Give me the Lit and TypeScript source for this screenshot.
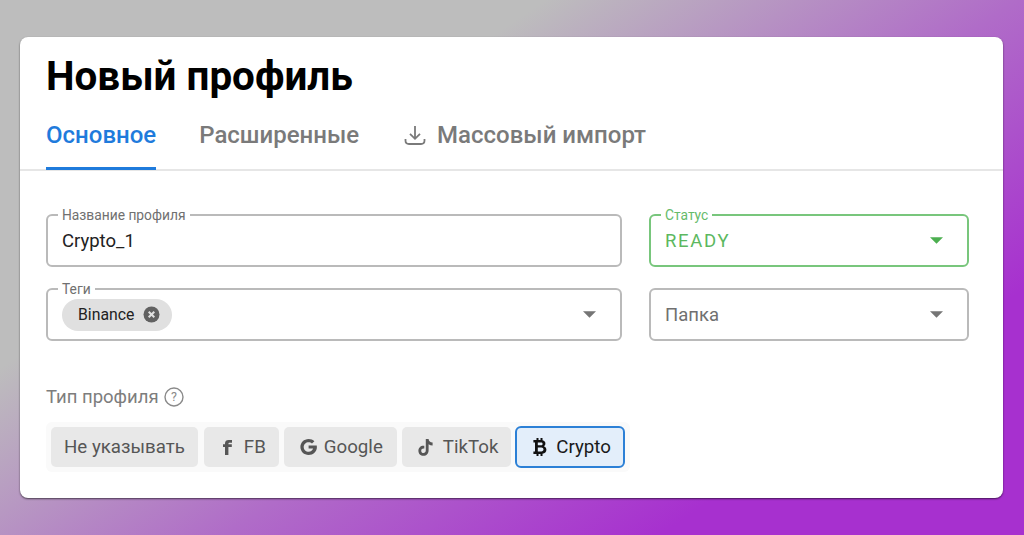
import { LitElement, html, css, svg } from "lit";
import { customElement } from "lit/decorators.js";

const caret = svg`<svg class="caret" width="13" height="7" viewBox="0 0 13 7"><path d="M0 0.2H13L6.5 6.8Z" fill="currentColor"/></svg>`;

@customElement("app-root")
export class AppRoot extends LitElement {
  static styles = css`
    :host { display: block; width: 1024px; height: 535px; overflow: hidden; font-family: Roboto, "Liberation Sans", sans-serif;
      background: linear-gradient(146deg, #bdbdbd 0%, #bdbdbd 30%, #b06cc8 56%, #a730cf 80%, #a730cf 100%); padding: 37px 21px 0 20px; box-sizing: border-box; }
    .card { background: #fff; border-radius: 8px; height: 461px; box-shadow: 0 1px 2px rgba(0,0,0,.6); box-sizing: border-box; }
    .head { padding: 16px 26px 0; border-bottom: 2px solid #e6e6e6; height: 134px; box-sizing: border-box; }
    h1 { margin: 0; font-size: 40.4px; line-height: 48px; font-weight: 700; color: #000; }
    .tabs { display: flex; gap: 43px; margin-top: 8px; }
    .tab { display: flex; align-items: center; gap: 11px; height: 61px; font-size: 24px; font-weight: 500; color: #7a7a7a; box-sizing: border-box; border-bottom: 3px solid transparent; padding-bottom: 7px; position: relative; z-index: 1; }
    .tab.on { color: #1f7bdc; border-bottom-color: #1f7bdc; }
    .tab svg { display: block; }
    .tab.imp { margin-left: 2px; }
    .body { padding: 43px 34px 0 26px; }
    .grid { display: grid; grid-template-columns: 576px 320px; column-gap: 27px; row-gap: 21px; }
    .field { position: relative; height: 53px; box-sizing: border-box; border: 2px solid #bababa; border-radius: 6px; display: flex; align-items: center; padding: 0 14px; font-size: 18.5px; color: #222; }
    .field label { position: absolute; left: 10px; top: -8px; background: #fff; padding: 0 4px; font-size: 13.8px; line-height: 15px; color: #707070; }
    .status { border-color: #78c67c; color: #5cb860; }
    .status label { color: #66bb6a; }
    .ready { letter-spacing: 1.7px; }
    .caret { position: absolute; right: 24px; top: calc(50% - 3.5px); color: #757575; }
    .status .caret { color: #4caf50; }
    .ph { color: #707070; }
    .chip { display: flex; align-items: center; gap: 9px; height: 32px; border-radius: 16px; background: #e0e0e0; padding: 0 12px 0 16px; font-size: 15.8px; color: #222; }
    .tlabel { display: flex; align-items: center; gap: 5px; margin-top: 44px; font-size: 18.5px; color: #7d7d7d; height: 24px; }
    .group { display: inline-flex; gap: 5px; margin-top: 13px; padding: 5px; background: #fafafa; border-radius: 6px; }
    .btn { display: flex; align-items: center; justify-content: center; height: 40px; box-sizing: border-box; padding: 0 13px; border-radius: 5px; background: #e8e8e8; color: #565656; font-size: 18.7px; }
    .btn svg { display: block; }
    .plain { margin-right: 1px; }
    .fb { padding: 0 13px 0 19px; gap: 12px; }
    .goog { padding: 0 14px 0 16px; gap: 7px; }
    .tik { padding: 0 13px 0 16px; gap: 10px; }
    .btn.sel { background: #e3eefa; border: 2px solid #2c80d6; color: #1a1a1a; height: 42px; margin: -1px 0 -1px -1px; padding: 0 12px 0 16px; border-radius: 6px; gap: 9px; }
  `;

  render() {
    return html`<div class="card">
      <div class="head">
        <h1>Новый профиль</h1>
        <div class="tabs">
          <div class="tab on">Основное</div>
          <div class="tab">Расширенные</div>
          <div class="tab imp">
            <svg width="22" height="22" viewBox="0 0 22 22" fill="none" stroke="#7a7a7a" stroke-width="1.8"><path d="M11 2V14.5M6 9.8L11 14.8L16 9.8"/><path d="M1.5 15V16.5C1.5 19 2.8 20 5 20H17C19.2 20 20.5 19 20.5 16.5V15"/></svg>
            Массовый импорт
          </div>
        </div>
      </div>
      <div class="body">
        <div class="grid">
          <div class="field"><label>Название профиля</label>Crypto_1</div>
          <div class="field status"><label>Статус</label><span class="ready">READY</span>${caret}</div>
          <div class="field"><label>Теги</label>
            <div class="chip">Binance
              <svg width="17" height="17" viewBox="0 0 17 17"><circle cx="8.5" cy="8.5" r="8" fill="#616161"/><path d="M5.7 5.7L11.3 11.3M11.3 5.7L5.7 11.3" stroke="#e0e0e0" stroke-width="2"/></svg>
            </div>${caret}</div>
          <div class="field"><span class="ph">Папка</span>${caret}</div>
        </div>
        <div class="tlabel">Тип профиля
          <svg width="20" height="20" viewBox="0 0 20 20"><circle cx="10" cy="10" r="9" fill="none" stroke="#8a8a8a" stroke-width="1.4"/><text x="10" y="14.2" text-anchor="middle" font-size="12.5" font-family="Roboto" fill="#8a8a8a">?</text></svg>
        </div>
        <div class="group">
          <div class="btn plain">Не указывать</div>
          <div class="btn fb">
            <svg width="9" height="15" viewBox="0 0 9 15"><path d="M2 15V7H0V4.2H2V3.4C2 1.2 3.4 0 5.6 0H9V2.8H6.8C5.8 2.8 5.4 3.2 5.4 4.1V4.2H8.8V7H5.4V15Z" fill="#565656"/></svg>
            FB</div>
          <div class="btn goog">
            <svg width="17" height="16" viewBox="0 0 17 16"><path d="M16.7 6.5H8.6V9.6H13.1C12.5 11.5 11 12.8 8.6 12.8C5.9 12.8 3.7 10.7 3.7 8C3.7 5.3 5.9 3.2 8.6 3.2C10 3.2 11.1 3.7 12 4.6L14.4 2.3C12.9 0.9 11 0 8.6 0C4 0 0.4 3.6 0.4 8C0.4 12.4 4 16 8.6 16C13.2 16 16.9 12.7 16.9 8C16.9 7.4 16.8 7 16.7 6.5Z" fill="#565656"/></svg>
            Google</div>
          <div class="btn tik">
            <svg width="15" height="17" viewBox="0 0 15 17"><path d="M7.8 0H10.6C10.8 2.2 12.2 3.4 14.6 3.6V6.4C13 6.4 11.7 6 10.6 5.2V11.2C10.6 14.6 8.5 16.8 5.5 16.8C2.5 16.8 0.4 14.6 0.4 11.7C0.4 8.5 3 6.3 6.3 6.8V9.6C4.6 9.2 3.2 10.2 3.2 11.7C3.2 13.1 4.2 14 5.4 14C6.8 14 7.8 12.9 7.8 11.2Z" fill="#565656"/></svg>
            TikTok</div>
          <div class="btn sel">
            <svg width="14" height="18" viewBox="0 0 14 18"><path fill-rule="evenodd" fill="#111" d="M3.5 0H5.5V2H7.5V0H9.5V2.2C11.4 2.6 12.4 3.9 12.4 5.4C12.4 6.7 11.8 7.6 10.8 8.2C12.3 8.8 13.4 10 13.4 11.8C13.4 13.9 11.9 15.5 9.5 15.8V18H7.5V16H5.5V18H3.5V16H0.4V13.4H2V4.6H0.4V2H3.5ZM4.8 4.6V7.2H8C8.9 7.2 9.6 6.6 9.6 5.9C9.6 5.1 8.9 4.6 8 4.6ZM4.8 9.6V13.4H8.4C9.6 13.4 10.5 12.6 10.5 11.5C10.5 10.4 9.6 9.6 8.4 9.6Z"/></svg>
            Crypto</div>
        </div>
      </div>
    </div>`;
  }
}
